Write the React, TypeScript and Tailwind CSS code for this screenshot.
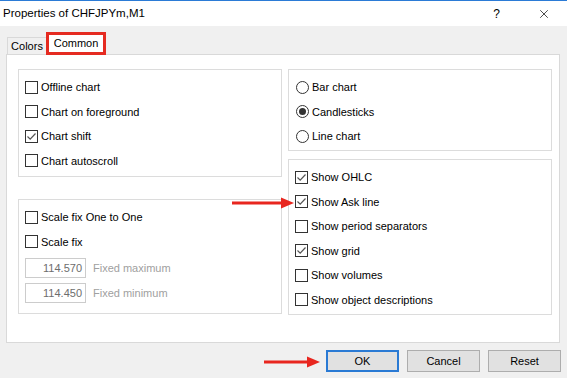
import { X } from 'lucide-react';

const font = { fontFamily: '"Liberation Sans", Arial, sans-serif' };

function CheckBox({ checked }: { checked?: boolean }) {
  return (
    <div className="w-[13px] h-[13px] border border-[#333333] bg-white flex items-center justify-center shrink-0">
      {checked && (
        <svg width="11" height="11" viewBox="0 0 11 11">
          <path d="M1.5 5.5 L4.2 8.2 L9.5 2.5" fill="none" stroke="#555555" strokeWidth="1.2" />
        </svg>
      )}
    </div>
  );
}

function Radio({ checked }: { checked?: boolean }) {
  return (
    <div className="w-[13px] h-[13px] rounded-full border border-[#333333] bg-white flex items-center justify-center shrink-0">
      {checked && <div className="w-[7px] h-[7px] rounded-full bg-[#333333]" />}
    </div>
  );
}

function Row({ children, label }: { children: React.ReactNode; label: string }) {
  return (
    <div className="h-[24.5px] flex items-center gap-[3px] text-[11px] text-black">
      {children}
      <span>{label}</span>
    </div>
  );
}

function Arrow({ width }: { width: number }) {
  return (
    <svg width={width} height="12" viewBox={`0 0 ${width} 12`}>
      <rect x="0" y="4.5" width={width - 11} height="3" fill="#e8261f" />
      <polygon points={`${width - 13},0.5 ${width},6 ${width - 13},11.5`} fill="#e8261f" />
    </svg>
  );
}

function Btn({ label, primary }: { label: string; primary?: boolean }) {
  return (
    <div
      className={`w-[73px] h-[22px] flex items-center justify-center bg-[#e1e1e1] text-[11px] text-black ${
        primary ? 'border-2 border-[#2a7ad4]' : 'border border-[#adadad]'
      }`}
    >
      {label}
    </div>
  );
}

export default function App() {
  return (
    <div className="w-[567px] h-[378px] bg-[#f0f0f0] relative overflow-hidden" style={font}>
      {/* title bar */}
      <div className="h-[26px] bg-white border-t border-[#2b7bd6] flex items-center pl-[3px] pr-[16px]">
        <span className="text-[11.5px] text-black flex-1">Properties of CHFJPYm,M1</span>
        <span className="text-[12px] text-black mr-[37px]">?</span>
        <X className="w-[14px] h-[14px] text-black" strokeWidth={1.2} />
      </div>

      {/* tabs */}
      <div className="h-[28px] flex items-end pl-[7px]">
        <div className="w-[40px] h-[17px] border border-b-0 border-[#d9d9d9] bg-[#f0f0f0] text-[11px] text-black flex items-center justify-center">
          Colors
        </div>
        <div className="w-[60px] h-[23px] border-[3px] border-[#e52b21] bg-white text-[11px] text-black flex items-center justify-center mb-[-1px] relative z-10 -ml-px">
          Common
        </div>
      </div>

      {/* panel */}
      <div className="ml-[6px] w-[554px] h-[289px] border border-[#d9d9d9] bg-white pt-[14px] pl-[11px] flex gap-[6px]">
        <div className="w-[264px] flex flex-col gap-[22px]">
          <div className="h-[108px] border border-[#dcdcdc] pl-[6px] pt-[5px]">
            <Row label="Offline chart"><CheckBox /></Row>
            <Row label="Chart on foreground"><CheckBox /></Row>
            <Row label="Chart shift"><CheckBox checked /></Row>
            <Row label="Chart autoscroll"><CheckBox /></Row>
          </div>
          <div className="h-[115px] border border-[#dcdcdc] pl-[6px] pt-[5px]">
            <Row label="Scale fix One to One"><CheckBox /></Row>
            <Row label="Scale fix"><CheckBox /></Row>
            <div className="mt-[4px] flex flex-col gap-[5px]">
              {[
                ['114.570', 'Fixed maximum'],
                ['114.450', 'Fixed minimum'],
              ].map(([v, l]) => (
                <div key={l} className="flex items-center gap-[7px] text-[11px]">
                  <div className="w-[61px] h-[20px] border border-[#cccccc] text-right pr-[3px] leading-[18px] text-[#6d6d6d]">
                    {v}
                  </div>
                  <span className="text-[#a0a0a0]">{l}</span>
                </div>
              ))}
            </div>
          </div>
        </div>

        <div className="w-[264px] flex flex-col gap-[8px]">
          <div className="h-[82px] border border-[#dcdcdc] pl-[7px] pt-[5px]">
            <Row label="Bar chart"><Radio /></Row>
            <Row label="Candlesticks"><Radio checked /></Row>
            <Row label="Line chart"><Radio /></Row>
          </div>
          <div className="h-[156px] border border-[#dcdcdc] pl-[6px] pt-[5px]">
            <Row label="Show OHLC"><CheckBox checked /></Row>
            <Row label="Show Ask line"><CheckBox checked /></Row>
            <Row label="Show period separators"><CheckBox /></Row>
            <Row label="Show grid"><CheckBox checked /></Row>
            <Row label="Show volumes"><CheckBox /></Row>
            <Row label="Show object descriptions"><CheckBox /></Row>
          </div>
        </div>
      </div>

      {/* buttons */}
      <div className="mt-[7px] flex justify-end gap-[8px] pr-[6px]">
        <Btn label="OK" primary />
        <Btn label="Cancel" />
        <Btn label="Reset" />
      </div>

      {/* annotation arrows */}
      <div className="absolute left-[232px] top-[197px]">
        <Arrow width={62} />
      </div>
      <div className="absolute left-[264px] top-[356px]">
        <Arrow width={56} />
      </div>
    </div>
  );
}
